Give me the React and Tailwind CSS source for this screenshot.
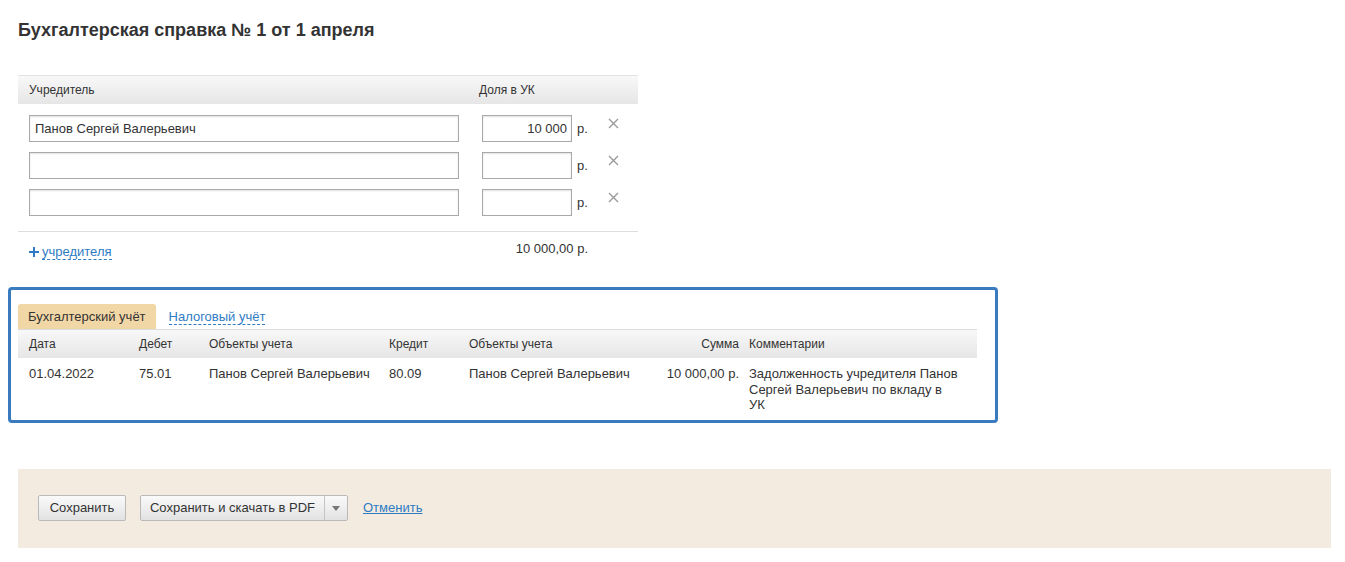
import { useState } from 'react'

const font = "font-['Liberation_Sans',Arial,sans-serif]"

function Cross() {
  return (
    <svg width="11" height="11" viewBox="0 0 11 11" className="block">
      <path d="M1 1L10 10M10 1L1 10" stroke="#9a9a9a" strokeWidth="1.4" />
    </svg>
  )
}

function FounderRow({ name, share }) {
  return (
    <div className="flex items-start h-[27px] mb-[10px]">
      <input
        defaultValue={name}
        className="w-[430px] h-[27px] border border-[#a9a9a9] shadow-[inset_0_1px_2px_rgba(0,0,0,0.12)] px-[5px] text-[13px] text-[#333] outline-none"
      />
      <input
        defaultValue={share}
        className="ml-[23px] w-[90px] h-[27px] border border-[#a9a9a9] shadow-[inset_0_1px_2px_rgba(0,0,0,0.12)] px-[4px] text-right text-[13px] text-[#333] outline-none"
      />
      <span className="ml-[5px] mt-[6px] text-[13px] leading-[16px] text-[#333]">р.</span>
      <span className="ml-[20px] mt-[3px]">
        <Cross />
      </span>
    </div>
  )
}

const headerBg = 'bg-[linear-gradient(#f8f8f8,#e6e6e6)]'

export default function App() {
  const [tab, setTab] = useState('buh')
  const rows = [
    { name: 'Панов Сергей Валерьевич', share: '10 000' },
    { name: '', share: '' },
    { name: '', share: '' },
  ]

  return (
    <div className={`${font} text-[#333] bg-white min-h-screen pl-[18px] pb-[14px]`}>
      <h1 className="pt-[19px] text-[18px] leading-[22px] font-bold text-[#333]">
        Бухгалтерская справка № 1 от 1 апреля
      </h1>

      <div className="mt-[34px] w-[620px]">
        <div className={`${headerBg} h-[29px] flex items-center text-[12px] border-t border-[#e2e2e2]`}>
          <span className="pl-[11px] w-[461px]">Учредитель</span>
          <span>Доля в УК</span>
        </div>
        <div className="pl-[11px] pt-[11px] pb-[5px]">
          {rows.map((r, i) => (
            <FounderRow key={i} name={r.name} share={r.share} />
          ))}
        </div>
        <div className="border-t border-[#dedede] h-[40px] flex items-start pt-[9px] text-[13px]">
          <a href="#" className="pl-[11px] flex items-center text-[#2e7bc4] mt-[3px]">
            <svg width="10" height="10" viewBox="0 0 10 10" className="mr-[3px]">
              <path d="M5 0V10M0 5H10" stroke="#2e7bc4" strokeWidth="2" />
            </svg>
            <span className="border-b border-dashed border-[#2e7bc4] leading-[15px]">учредителя</span>
          </a>
          <span className="ml-auto mr-[50px] leading-[16px]">10 000,00 р.</span>
        </div>
      </div>

      <div className="mt-[16px] -ml-[10px] w-[990px] border-[3px] border-[#3a7bc0] rounded-[4px] pl-[7px] pr-[18px] pt-[14px] pb-[7px] text-[13px]">
        <div className="flex items-end h-[25px]">
          <button
            onClick={() => setTab('buh')}
            className={`h-[25px] px-[10px] rounded-t-[3px] leading-[25px] ${tab === 'buh' ? 'bg-[#f2d7a6]' : ''}`}
          >
            Бухгалтерский учёт
          </button>
          <button
            onClick={() => setTab('tax')}
            className={`ml-[3px] h-[25px] px-[10px] rounded-t-[3px] leading-[25px] ${tab === 'tax' ? 'bg-[#f2d7a6]' : ''}`}
          >
            <span className="text-[#2e7bc4] border-b border-dashed border-[#2e7bc4]">Налоговый учёт</span>
          </button>
        </div>
        <div className={`${headerBg} h-[29px] flex items-center border-t border-[#dcdcdc] text-[12px]`}>
          <span className="pl-[11px] w-[110px]">Дата</span>
          <span className="pl-[11px] w-[70px]">Дебет</span>
          <span className="pl-[11px] w-[180px]">Объекты учета</span>
          <span className="pl-[11px] w-[80px]">Кредит</span>
          <span className="pl-[11px] w-[180px]">Объекты учета</span>
          <span className="w-[101px] text-right">Сумма</span>
          <span className="pl-[10px]">Комментарии</span>
        </div>
        <div className="flex items-start pt-[8px] leading-[15.5px]">
          <span className="pl-[11px] w-[110px]">01.04.2022</span>
          <span className="pl-[11px] w-[70px]">75.01</span>
          <span className="pl-[11px] w-[180px]">Панов Сергей Валерьевич</span>
          <span className="pl-[11px] w-[80px]">80.09</span>
          <span className="pl-[11px] w-[180px]">Панов Сергей Валерьевич</span>
          <span className="w-[101px] text-right">10 000,00 р.</span>
          <span className="pl-[10px] w-[222px]">
            Задолженность учредителя Панов Сергей Валерьевич по вкладу в УК
          </span>
        </div>
      </div>

      <div className="mt-[46px] w-[1313px] h-[79px] bg-[#f3ebdf] pl-[20px] flex items-center text-[13px]">
        <button className="h-[26px] w-[88px] border border-[#b9b9b9] rounded-[2px] bg-[linear-gradient(#fafafa,#e2e2e2)]">
          Сохранить
        </button>
        <div className="ml-[14px] flex h-[26px] border border-[#b9b9b9] rounded-[2px] bg-[linear-gradient(#fafafa,#e2e2e2)]">
          <button className="w-[183px]">Сохранить и скачать в PDF</button>
          <button className="w-[23px] border-l border-[#c4c4c4] flex items-center justify-center">
            <svg width="8" height="5" viewBox="0 0 8 5">
              <path d="M0 0H8L4 5Z" fill="#777" />
            </svg>
          </button>
        </div>
        <a href="#" className="ml-[15px] text-[#2e7bc4] underline">
          Отменить
        </a>
      </div>
    </div>
  )
}
